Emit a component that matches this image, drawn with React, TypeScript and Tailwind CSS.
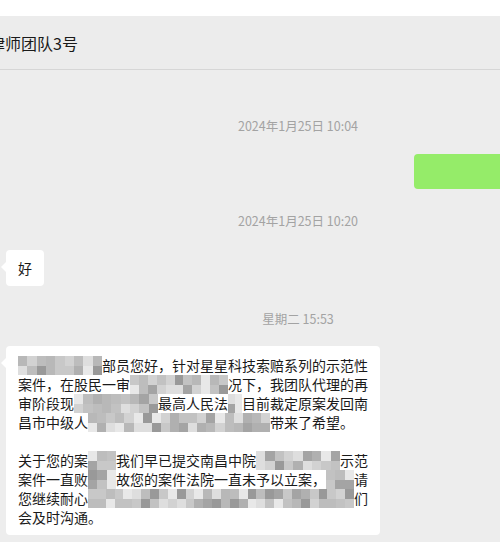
import React from 'react';

type Seg = string | { m: number; seed: number };

const SHADES = ['#b0b0b0', '#c2c2c2', '#d2d2d2', '#b8b8b8', '#dedede', '#a4a4a4', '#c8c8c8', '#999999', '#e8e8e8', '#bdbdbd'];

const Mosaic: React.FC<{ width: number; seed: number }> = ({ width, seed }) => {
  const cols = Math.max(1, Math.round(width / 9));
  let s = seed;
  const next = () => {
    s = (s * 9301 + 49297) % 233280;
    return s / 233280;
  };
  const cells = Array.from({ length: cols * 2 }, () => SHADES[Math.floor(next() * SHADES.length)]);
  return (
    <span
      className="inline-grid h-[19px] grid-rows-2 align-top"
      style={{ width, gridTemplateColumns: `repeat(${cols}, 1fr)` }}
    >
      {cells.map((c, i) => (
        <span key={i} style={{ backgroundColor: c }} />
      ))}
    </span>
  );
};

const lines: Seg[][] = [
  [{ m: 84, seed: 3 }, '部员您好，针对星星科技索赔系列的示范性'],
  ['案件，在股民一审', { m: 98, seed: 11 }, '况下，我团队代理的再'],
  ['审阶段现', { m: 84, seed: 17 }, '最高人民法', { m: 14, seed: 5 }, '目前裁定原案发回南'],
  ['昌市中级人', { m: 182, seed: 29 }, '带来了希望。'],
  [],
  ['关于您的案', { m: 28, seed: 41 }, '我们早已提交南昌中院', { m: 84, seed: 7 }, '示范'],
  ['案件一直败', { m: 28, seed: 13 }, '故您的案件法院一直未予以立案，', { m: 28, seed: 23 }, '请'],
  ['您继续耐心', { m: 266, seed: 37 }, '们'],
  ['会及时沟通。'],
];

const Timestamp: React.FC<{ text: string; className?: string }> = ({ text, className }) => (
  <div className={`ml-[96px] text-center text-[12.5px] leading-4 text-[#a3a3a3] ${className ?? ''}`}>{text}</div>
);

const Arrow: React.FC = () => (
  <span className="absolute left-[-5px] top-[12px] h-0 w-0 border-y-[5px] border-r-[5px] border-y-transparent border-r-white" />
);

export default function App() {
  return (
    <div className="h-[542px] w-[500px] overflow-hidden bg-[#ededed] font-['Noto_Sans_CJK_SC','Microsoft_YaHei',sans-serif] text-[#1a1a1a]">
      <div className="h-4 bg-white" />
      <div className="flex h-[54px] items-center border-b border-[#d6d6d6] bg-[#ececec]">
        <span className="-ml-[11px] whitespace-nowrap text-base">律师团队3号</span>
      </div>

      <div className="flex flex-col">
        <Timestamp text="2024年1月25日 10:04" className="mt-12" />

        <div className="mt-5 flex justify-end">
          <div className="-mr-6 h-[35px] w-[110px] rounded bg-[#95ec69]" />
        </div>

        <Timestamp text="2024年1月25日 10:20" className="mt-6" />

        <div className="mt-[21px] flex pl-1.5">
          <div className="relative rounded bg-white px-3 py-2 text-sm leading-5">
            <Arrow />
            好
          </div>
        </div>

        <Timestamp text="星期二 15:53" className="mt-[25px]" />

        <div className="mt-[19px] flex pl-1.5">
          <div className="relative w-[374px] rounded bg-white px-3 pb-2 pt-2.5 text-sm leading-[19px]">
            <Arrow />
            {lines.map((line, i) => (
              <div key={i} className="h-[19px] whitespace-nowrap">
                {line.map((seg, j) =>
                  typeof seg === 'string' ? (
                    <span key={j}>{seg}</span>
                  ) : (
                    <Mosaic key={j} width={seg.m} seed={seg.seed} />
                  )
                )}
              </div>
            ))}
          </div>
        </div>
      </div>
    </div>
  );
}
